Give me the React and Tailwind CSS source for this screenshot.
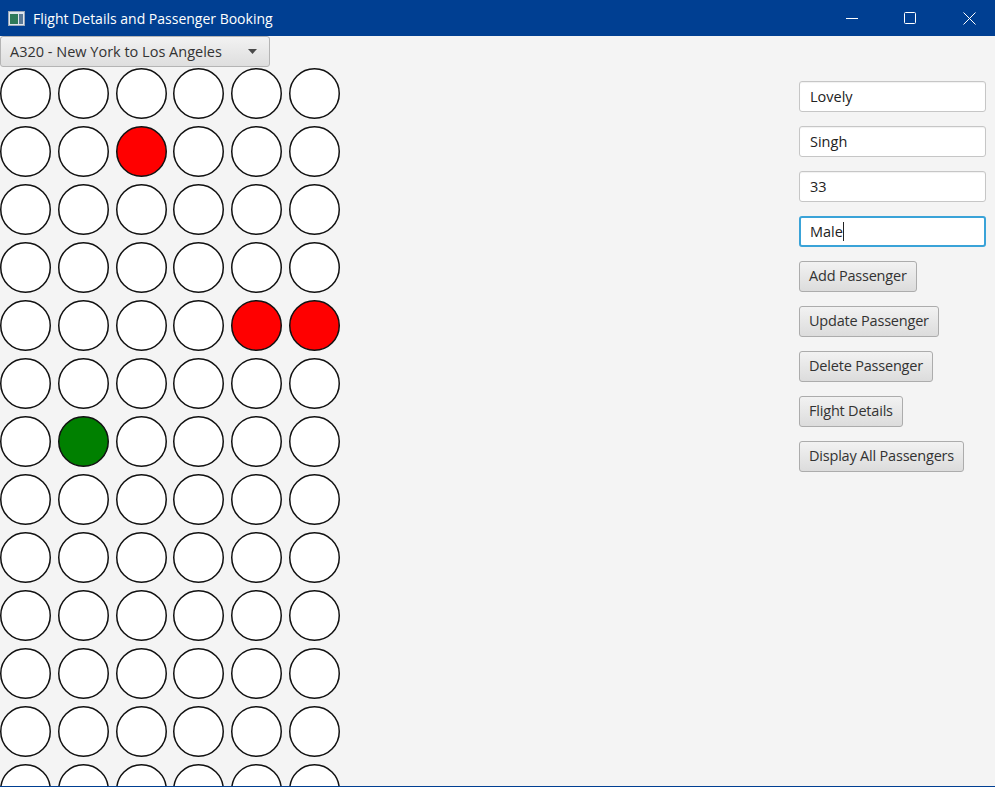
import React from "react";

const ROWS = 13;
const COLS = 6;

// booked seats: red, selected seat: green
const seatFill = (r, c) => {
  if ((r === 1 && c === 2) || (r === 4 && (c === 4 || c === 5))) return "#ff0000";
  if (r === 6 && c === 1) return "#008000";
  return "#ffffff";
};

function TitleBar() {
  return (
    <div className="h-9 bg-[#003f92] flex items-center text-white shrink-0">
      <svg width="17" height="15" viewBox="0 0 17 15" className="ml-2 mr-2">
        <rect x="0.5" y="0.5" width="16" height="14" fill="#dfe6ee" stroke="#9aa8b8" />
        <rect x="2" y="3" width="8" height="10" fill="#2e7a5a" />
        <rect x="11" y="3" width="4" height="10" fill="#5a7a98" />
      </svg>
      <span className="text-[14px]">Flight Details and Passenger Booking</span>
      <div className="ml-auto flex items-center h-full pr-[3px]">
        <div className="w-[46px] h-full flex items-center justify-center">
          <svg width="12" height="12" viewBox="0 0 12 12">
            <line x1="0" y1="6.5" x2="12" y2="6.5" stroke="white" strokeWidth="1" />
          </svg>
        </div>
        <div className="w-[46px] h-full flex items-center justify-center ml-[12px]">
          <svg width="12" height="12" viewBox="0 0 12 12">
            <rect x="0.5" y="0.5" width="11" height="11" rx="1" fill="none" stroke="white" strokeWidth="1" />
          </svg>
        </div>
        <div className="w-[46px] h-full flex items-center justify-center ml-[13px]">
          <svg width="13" height="13" viewBox="0 0 13 13">
            <path d="M0.5 0.5 L12.5 12.5 M12.5 0.5 L0.5 12.5" stroke="white" strokeWidth="1" />
          </svg>
        </div>
      </div>
    </div>
  );
}

function Field({ value, focused }) {
  return (
    <div
      className={
        "w-[187px] h-[31px] rounded-[3px] bg-white flex items-center text-[14.5px] text-[#222] " +
        (focused
          ? "border-2 border-[#3aa3d8] px-[9px]"
          : "border border-[#c6c6c6] px-[10px] shadow-[inset_0_1px_1px_rgba(0,0,0,0.06)]")
      }
    >
      {value}
      {focused && <span className="w-px h-[19px] bg-[#222]" />}
    </div>
  );
}

function Btn({ children }) {
  return (
    <button className="h-[31px] px-[9px] rounded-[3px] border border-[#acacac] bg-gradient-to-b from-[#f2f2f2] to-[#dcdcdc] text-[14.5px] text-[#333] tracking-[-0.2px] leading-none self-start">
      {children}
    </button>
  );
}

function Seat({ fill }) {
  return (
    <svg width="51" height="51" viewBox="0 0 51 51">
      <circle cx="25.5" cy="25.5" r="24.75" fill={fill} stroke="#111" strokeWidth="1.5" />
    </svg>
  );
}

export default function App() {
  return (
    <div
      className="w-[995px] h-[787px] flex flex-col bg-[#f4f4f4] overflow-hidden border-b border-[#003f92]"
      style={{ fontFamily: '"Open Sans", "Noto Sans", sans-serif' }}
    >
      <TitleBar />
      <div className="flex flex-1 overflow-hidden">
        {/* Seat map */}
        <div className="flex flex-col w-[345px] shrink-0">
          <div className="shrink-0 w-[270px] h-[31px] rounded-[3px] border border-[#b4b4b4] bg-gradient-to-b from-[#f2f2f2] to-[#dedede] flex items-center pl-[9px] pr-[12px] text-[14.5px] text-[#333]">
            <span>A320 - New York to Los Angeles</span>
            <svg width="9" height="5" viewBox="0 0 9 5" className="ml-auto">
              <path d="M0 0 L9 0 L4.5 5 Z" fill="#4a4a4a" />
            </svg>
          </div>
          <div className="shrink-0 grid grid-cols-[repeat(6,51px)] gap-x-[6.8px] gap-y-[7px] mt-px">
            {Array.from({ length: ROWS }).map((_, r) =>
              Array.from({ length: COLS }).map((_, c) => (
                <Seat key={r + "-" + c} fill={seatFill(r, c)} />
              ))
            )}
          </div>
        </div>

        {/* Passenger form */}
        <div className="ml-auto pr-[9px] pt-[45px] flex flex-col gap-[14px]">
          <Field value="Lovely" />
          <Field value="Singh" />
          <Field value="33" />
          <Field value="Male" focused />
          <Btn>Add Passenger</Btn>
          <Btn>Update Passenger</Btn>
          <Btn>Delete Passenger</Btn>
          <Btn>Flight Details</Btn>
          <Btn>Display All Passengers</Btn>
        </div>
      </div>
    </div>
  );
}
